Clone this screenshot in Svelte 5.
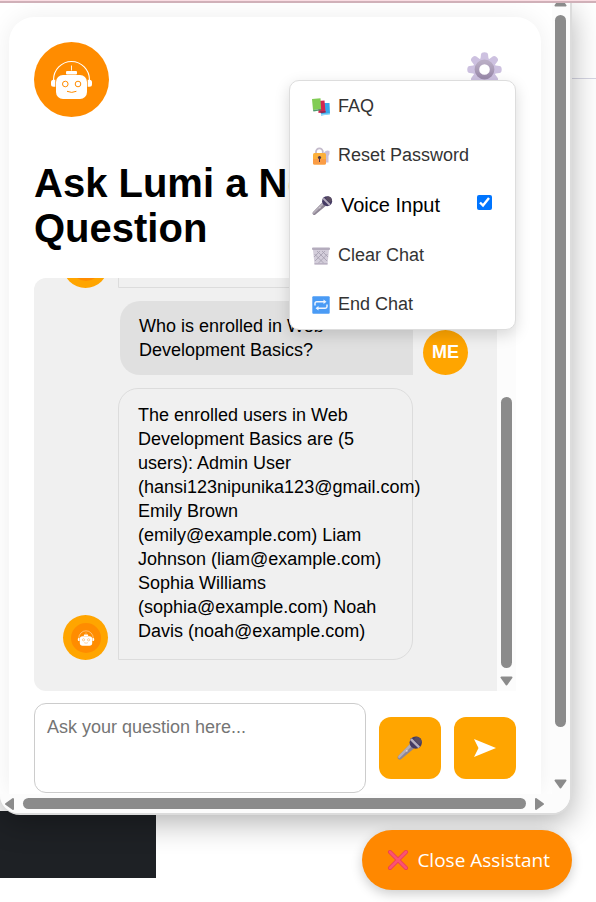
<script>
  let question = $state('');
  let voice = $state(true);
</script>

{#snippet robot(size)}
  <svg width={size} height={size} viewBox="0 0 75 75" aria-hidden="true">
    <circle cx="37.5" cy="37.5" r="37.5" fill="#ff8c00" />
    <path d="M19.5 38a18 18.5 0 0 1 36 0" fill="none" stroke="#fff" stroke-width="1.1" />
    <path d="M37.5 23.5v5" stroke="#fff" stroke-width="0.9" />
    <rect x="32" y="29" width="11" height="3.5" rx="1" fill="#fff" />
    <rect x="22" y="33" width="31" height="24" rx="7" fill="#fff" />
    <path d="M21.3 37.7v7h-1.8a2.5 2.5 0 0 1-2.5-2.5v-2a2.5 2.5 0 0 1 2.5-2.5zM53.7 37.7v7h1.8a2.5 2.5 0 0 0 2.5-2.5v-2a2.5 2.5 0 0 0-2.5-2.5z" fill="#fff" />
    <g fill="none" stroke="#ff8c00" stroke-width="1">
      <circle cx="31.3" cy="42" r="2.8" />
      <circle cx="44" cy="42" r="2.8" />
      <path d="M33 49.3q4.7 2.2 9.4 0" />
    </g>
  </svg>
{/snippet}

{#snippet mic(size)}
  <svg width={size} height={size} viewBox="0 0 26 26" aria-hidden="true">
    <path d="M13 9 17 13.500 4.300 24a2 2 0 0 1-3-3z" fill="#8e8594" />
    <path d="M13 9 15 11 2.200 23.500a2 2 0 0 1-.9-2.500z" fill="#b4adb8" />
    <circle cx="18.700" cy="7.600" r="6.200" fill="#443a63" />
    <path d="M19.500 1.500a6.200 6.200 0 0 1 5.400 5.400l-3 2.400-5-5z" fill="#594c62" />
    <path d="M13 5.100 14.800 3.300 23 11.600 21.300 13.200z" fill="#b5adbd" />
    <circle cx="9.800" cy="15.800" r=".9" fill="#dcd8e0" />
  </svg>
{/snippet}

{#snippet arrow(dir)}
  <svg class="arrow" width="13" height="10" viewBox="0 0 13 10" style:transform={`rotate(${dir}deg)`} aria-hidden="true">
    <path d="M1.500 1.500h10L6.500 8.500z" fill="#8b8b8b" stroke="#8b8b8b" stroke-width="2" stroke-linejoin="round" />
  </svg>
{/snippet}

<div class="page">
  <div class="backdrop" aria-hidden="true">
    <div class="rule"></div>
    <div class="footer"></div>
  </div>
  <div class="strip"></div>

  <section class="widget" aria-label="Lumi assistant">
    <div class="viewport">
      <main class="card">
        <header>
          {@render robot(75)}
          <div class="settings">
            <button class="gear" aria-label="Settings">
              <svg width="35" height="35" viewBox="0 0 35 35" aria-hidden="true">
                <defs>
                  <linearGradient id="ring" x2="0" y2="1"><stop stop-color="#b9adc4" /><stop offset="1" stop-color="#9b8bab" /></linearGradient>
                </defs>
                <g fill="#cdc1e0">
                  {#each [0, 45, 90, 135, 180, 225, 270, 315] as a}
                    <path d="M13 10 14 2.500q.3-2.200 3.500-2.200t3.500 2.200L22 10z" transform={`rotate(${a} 17.5 17.5)`} />
                  {/each}
                  <circle cx="17.500" cy="17.500" r="11.500" />
                </g>
                <circle cx="17.500" cy="17.500" r="7.600" fill="#fff" stroke="url(#ring)" stroke-width="4.600" />
              </svg>
            </button>
            <div class="menu">
              <button class="item">
                <svg width="18" height="18" viewBox="0 0 18 18" aria-hidden="true">
                  <path d="M10 5h7.500l.5 11-9 1.500z" fill="#35a9ec" /><path d="M9 16l9-.8v1.300l-9 1z" fill="#8fd8f8" />
                  <path d="M6 3l6.500-.5 1 11.500-7 1z" fill="#d3264f" /><path d="M8 13.500l5.500-.5.2 1.600-5 .6z" fill="#8c2a55" />
                  <path d="M0 1 8.500.3l.6 10.700L1 12z" fill="#82cc55" /><path d="M1 12 9.100 11v1.300L1.500 13.600z" fill="#4f9b6c" />
                </svg>
                <span>FAQ</span>
              </button>
              <button class="item">
                <svg width="18" height="18" viewBox="0 0 18 18" aria-hidden="true">
                  <path d="M12 5.500q2.500-3 5.500-1.500.5 3-1 5v6.500h-3z" fill="#cbc1da" />
                  <path d="M4 8V4.800a3.400 3.400 0 0 1 6.800 0V8" fill="none" stroke="#c3bacb" stroke-width="1.800" />
                  <rect x="1" y="6" width="13" height="11.500" rx="1.500" fill="#fcb03c" />
                  <path d="M1 12h13v4a1.500 1.500 0 0 1-1.500 1.500h-10A1.500 1.500 0 0 1 1 16z" fill="#fa9c45" />
                  <circle cx="7.500" cy="10.500" r="1.600" fill="#4d354b" /><path d="M7 11h1v4H7z" fill="#4d354b" />
                </svg>
                <span>Reset Password</span>
              </button>
              <label class="item voice">
                {@render mic(21)}
                <span>Voice Input</span>
                <input type="checkbox" bind:checked={voice} />
              </label>
              <button class="item">
                <svg width="18" height="18" viewBox="0 0 18 18" aria-hidden="true">
                  <path d="M1 3h16l-1.500 14.500h-13z" fill="#d3cdda" />
                  <path d="M2.500 7 12 16.500M5 4l10 10M10 4l6 6M15.500 7 6 16.500M13 4 3 14M8 4 2 10" stroke="#a59eae" stroke-width=".8" />
                  <path d="M2.500 16h13v1.500h-13z" fill="#bab2c3" /><rect x="0" y=".5" width="18" height="2.600" rx="1" fill="#b4acbd" />
                </svg>
                <span>Clear Chat</span>
              </button>
              <button class="item">
                <svg width="18" height="18" viewBox="0 0 18 18" aria-hidden="true">
                  <rect x=".3" y=".3" width="17.400" height="17.400" rx="1" fill="#4a9bf5" />
                  <path d="M3 9.500V7.500A1.700 1.700 0 0 1 4.700 5.800H12M15 8.500v2a1.700 1.700 0 0 1-1.700 1.700H6" fill="none" stroke="#eef4fd" stroke-width="1.500" />
                  <path d="M11.500 3.500 14.500 5.800l-3 2.300zM6.500 9.900 3.500 12.200l3 2.300z" fill="#eef4fd" />
                </svg>
                <span>End Chat</span>
              </button>
            </div>
          </div>
        </header>

        <h1>Ask Lumi a New Question</h1>

        <div class="chat">
          <div class="log">
            <div class="row">
              <div class="avatar">{@render robot(30)}</div>
              <div class="bubble bot"></div>
            </div>
            <div class="row mine">
              <div class="bubble user">Who is enrolled in Web Development Basics?</div>
              <div class="avatar">ME</div>
            </div>
            <div class="row">
              <div class="avatar">{@render robot(30)}</div>
              <div class="bubble bot">The enrolled users in Web Development Basics are (5 users): Admin User (hansi123nipunika123@gmail.com) Emily Brown (emily@example.com) Liam Johnson (liam@example.com) Sophia Williams (sophia@example.com) Noah Davis (noah@example.com)</div>
            </div>
          </div>
          <div class="track inner">
            <div class="thumb"></div>
            {@render arrow(0)}
          </div>
        </div>

        <form onsubmit={(e) => e.preventDefault()}>
          <textarea aria-label="Your question" placeholder="Ask your question here..." bind:value={question}></textarea>
          <button class="square" type="button" aria-label="Speak">{@render mic(26)}</button>
          <button class="square" type="submit" aria-label="Send">
            <svg width="22" height="18" viewBox="0 0 22 18" aria-hidden="true"><path d="M0 0 22 9 0 18 4.500 9z" fill="#fff" /></svg>
          </button>
        </form>
      </main>
    </div>
    <div class="track outer">
      {@render arrow(180)}
      <div class="thumb"></div>
      {@render arrow(0)}
    </div>
    <div class="track across">
      {@render arrow(90)}
      <div class="thumb"></div>
      {@render arrow(270)}
    </div>
  </section>

  <button class="close">
    <svg width="22" height="22" viewBox="0 0 22 22" aria-hidden="true">
      <path d="m3 3 16 16M19 3 3 19" stroke="#e83b57" stroke-width="4" stroke-linecap="round" />
      <path d="m3 3 16 16M19 3 3 19" stroke="#fb5274" stroke-width="2.500" stroke-linecap="round" />
    </svg>
    <span>Close Assistant</span>
  </button>
</div>

<style>
  .page, .page * { box-sizing: border-box; }
  .page {
    position: relative;
    display: flex;
    flex-direction: column;
    min-height: 100vh;
    overflow: hidden;
    background: #fff;
    font-family: "Liberation Sans", Arial, sans-serif;
    font-size: 18px;
    color: #000;
  }
  svg { display: block; flex: none; }
  button { font: inherit; border: 0; padding: 0; cursor: pointer; }
  .backdrop { position: absolute; inset: 0; }
  .rule { height: 79px; border-bottom: 1px solid #d6d6e3; }
  .footer { width: 156px; height: 67px; margin-top: 732px; background: #1e2125; }
  .strip {
    position: relative;
    z-index: 1;
    height: 3px;
    background: #fadde3;
    border-bottom: 2px solid #d0b0b8;
  }
  .widget {
    position: relative;
    display: grid;
    grid-template-columns: minmax(0, 1fr) 18px;
    margin-right: 24px;
    border: solid #dcdcdc;
    border-width: 0 2px 2px 0;
    border-radius: 0 0 20px 20px;
    background: #fcfcfc;
    box-shadow: 0 8px 30px rgba(0, 0, 0, 0.3);
  }
  .viewport { overflow: hidden; padding: 14px 11px 0 9px; background: #fff; }
  .card {
    padding: 25px 25px 1px;
    border-radius: 25px 25px 0 0;
    background: #fff;
    box-shadow: 0 0 25px rgba(0, 0, 0, 0.07);
  }
  header { display: flex; justify-content: space-between; align-items: flex-start; }
  .settings { position: relative; }
  .gear { padding: 10px 14px; background: none; }
  .menu {
    position: absolute;
    z-index: 2;
    top: 38px;
    right: 0;
    width: 227px;
    padding-top: 1px;
    border: 1px solid #ddd;
    border-radius: 10px;
    background: #fff;
    box-shadow: 0 5px 15px rgba(0, 0, 0, 0.15);
  }
  .item {
    display: flex;
    align-items: center;
    gap: 8px;
    width: 100%;
    height: 49px;
    padding: 0 22px;
    background: none;
    color: #333;
    text-align: left;
  }
  .voice { height: 51px; color: #000; font-size: 20px; }
  .voice input {
    width: 15px;
    height: 15px;
    margin: 0 1px 6px auto;
    accent-color: #0075ff;
  }
  h1 { margin: 44px 0 27px; font-size: 40px; line-height: 45px; font-weight: 700; }
  .chat {
    display: flex;
    height: 413px;
    border-radius: 12px 0 0 12px;
    overflow: hidden;
    background: #f0f0f0;
  }
  .log {
    flex: 1;
    min-width: 0;
    display: flex;
    flex-direction: column;
    justify-content: flex-end;
    gap: 13px;
    padding: 0 29px 31px;
  }
  .row { display: flex; align-items: flex-end; gap: 10px; }
  .mine { justify-content: flex-end; }
  .avatar {
    display: flex;
    flex: none;
    align-items: center;
    justify-content: center;
    width: 45px;
    height: 45px;
    border-radius: 50%;
    background: #ffa500;
    color: #fff;
    font-weight: 700;
  }
  .bubble { flex: 0 1 295px; min-width: 0; min-height: 74px; padding: 13px 19px; line-height: 24px; }
  .bot { padding: 14px 18px 16px 19px; border: 1px solid #dcdcdc; border-radius: 20px 20px 20px 0; }
  .user { flex-basis: 293px; border-radius: 20px 20px 0 20px; background: #e0e0e0; }
  .track { display: flex; align-items: center; background: #fcfcfc; }
  .thumb { border-radius: 6px; background: #8b8b8b; }
  .inner { flex-direction: column; justify-content: flex-end; gap: 8px; width: 19px; padding-bottom: 5px; }
  .inner .thumb { width: 11px; height: 271px; }
  .outer { flex-direction: column; justify-content: space-between; gap: 8px; padding: 0 2px 5px 0; }
  .outer .thumb { width: 11px; flex: 1; margin-bottom: 44px; }
  .outer .arrow:first-child { margin-top: -6px; }
  .across {
    grid-column: 1 / -1;
    gap: 7px;
    height: 19px;
    padding: 0 24px 0 3px;
    border-radius: 0 0 18px 18px;
  }
  .across .thumb { flex: 1; height: 11px; }
  form { display: flex; align-items: center; gap: 13px; margin-top: 12px; }
  textarea {
    flex: 1;
    min-width: 0;
    height: 90px;
    padding: 13px 12px;
    border: 1px solid #ccc;
    border-radius: 12px;
    background: #fff;
    font: inherit;
    resize: none;
  }
  textarea::placeholder { color: #757575; }
  .square {
    display: flex;
    align-items: center;
    justify-content: center;
    width: 62px;
    height: 62px;
    border-radius: 12px;
    background: #ffa500;
  }
  .close {
    position: relative;
    display: flex;
    align-items: center;
    align-self: flex-end;
    justify-content: center;
    gap: 8px;
    height: 60px;
    margin: 15px 24px 12px 0;
    padding: 0 22px 0 25px;
    border-radius: 30px;
    background: #ff8800;
    color: #fff;
    font-family: "Open Sans", "Noto Sans", sans-serif;
    font-size: 19px;
    box-shadow: 0 4px 12px rgba(0, 0, 0, 0.2);
  }
</style>
